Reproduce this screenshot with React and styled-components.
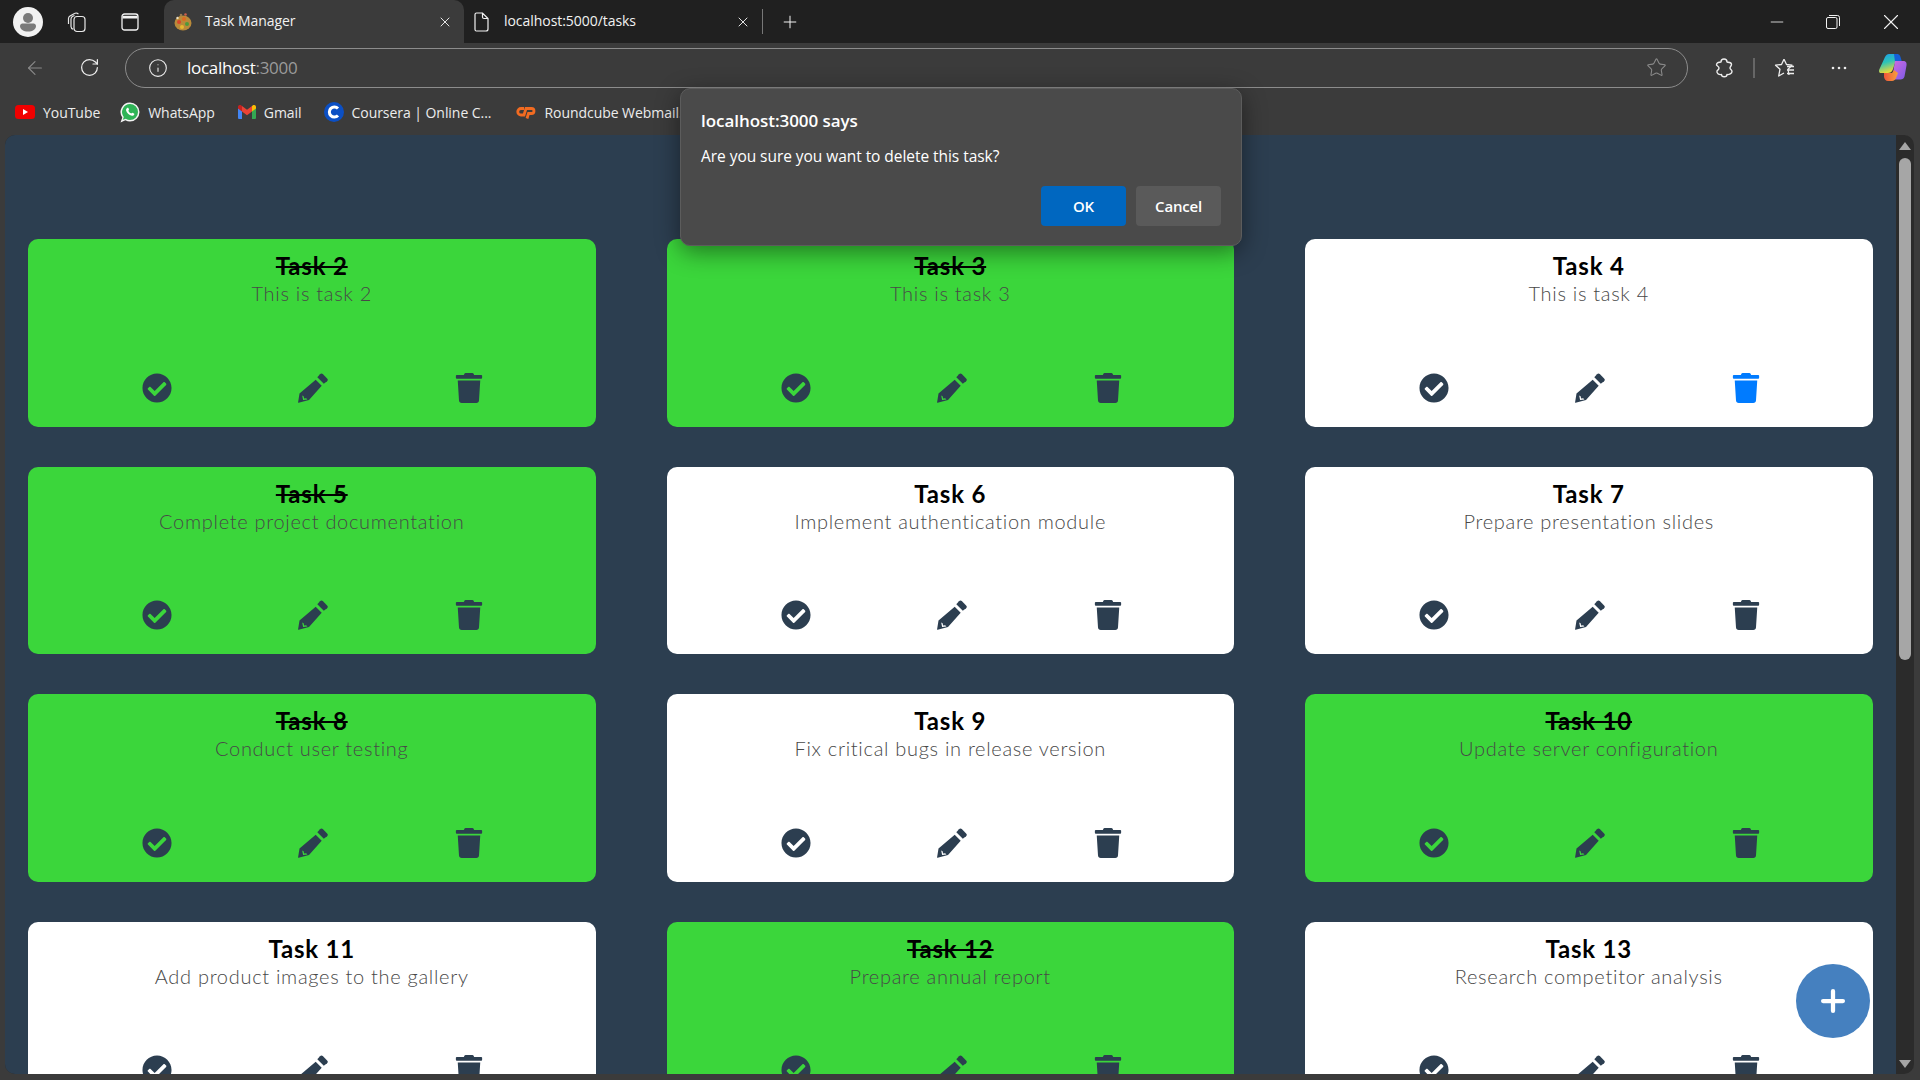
import React from "react";
import styled, { createGlobalStyle } from "styled-components";
import { FaCheckCircle, FaTrash } from "react-icons/fa";
import { ArrowLeft, RotateCw, Info, Star, Minus, X, Plus } from "lucide-react";

const uiFont = `"Open Sans", "Noto Sans", sans-serif`;

const GlobalStyle = createGlobalStyle`
    html, body {
        margin: 0;
        height: 100%;
        overflow: hidden;
        background: #1c1c1c;
    }
    * { box-sizing: border-box; }
`;

const Shell = styled.div`
    position: relative;
    width: 1920px;
    height: 1080px;
    display: flex;
    flex-direction: column;
    overflow: hidden;
    background: #3b3b3b;
    font-family: ${uiFont};
`;

/* tab strip */
const TabStrip = styled.div`
    height: 43px;
    flex: none;
    display: flex;
    align-items: center;
    background: #202020;
    color: #f2f2f2;
`;

const StripIcons = styled.div`
    width: 164px;
    flex: none;
    display: flex;
    align-items: center;
    padding-left: 13px;
`;

const StripSlot = styled.div`
    width: ${(p) => p.$w}px;
    flex: none;
    display: flex;
    justify-content: center;
    align-items: center;
`;

const Tab = styled.div`
    height: 43px;
    width: ${(p) => p.$w}px;
    flex: none;
    display: flex;
    align-items: center;
    padding: 0 11px 0 ${(p) => p.$pl}px;
    border-radius: 10px 10px 0 0;
    background: ${(p) => (p.$active ? "#3b3b3b" : "transparent")};
`;

const TabTitle = styled.span`
    flex: 1;
    margin: 0 0 2px ${(p) => p.$ml}px;
    font-size: 14px;
    letter-spacing: -0.05px;
    white-space: nowrap;
`;

const TabDivider = styled.div`
    width: 1px;
    height: 25px;
    flex: none;
    margin: 0 17px 0 0;
    background: #777;
`;

const WindowControls = styled.div`
    margin-left: auto;
    display: flex;
    align-items: center;
    padding-right: 16px;
    gap: 38.5px;
`;

/* address bar row */
const Toolbar = styled.div`
    height: 48px;
    flex: none;
    display: flex;
    align-items: center;
    padding: 1px 0 0 24px;
`;

const NavIcons = styled.div`
    width: 101px;
    flex: none;
    display: flex;
    align-items: center;
    gap: 33px;
`;

const AddressBar = styled.div`
    width: 1563px;
    height: 40px;
    flex: none;
    display: flex;
    align-items: center;
    padding: 0 20px 0 22px;
    border: 1.5px solid #8c8c8c;
    border-radius: 20px;
`;

const Url = styled.div`
    flex: 1;
    margin-left: 19px;
    font-size: 17px;
    letter-spacing: -0.3px;
    color: #fff;
    span { color: #9a9a9a; }
`;

const ToolIcons = styled.div`
    flex: 1;
    display: flex;
    align-items: center;
    padding-left: 26px;
`;

const ToolDivider = styled.div`
    width: 1.5px;
    height: 20px;
    margin: 0 19px 0 19px;
    background: #666;
`;

const DotsSlot = styled.div`
    width: 84px;
    flex: none;
    display: flex;
    justify-content: center;
    padding-left: 5px;
`;

/* bookmarks */
const Bookmarks = styled.div`
    height: 44px;
    flex: none;
    display: flex;
    align-items: center;
    padding: 0 0 2px 15px;
    color: #ececec;
    font-size: 14px;
    letter-spacing: -0.05px;
    white-space: nowrap;
`;

const Bookmark = styled.div`
    display: flex;
    align-items: center;
    gap: 8px;
    margin-right: ${(p) => p.$mr}px;
`;

/* page viewport */
const Viewport = styled.div`
    flex: 1;
    min-height: 0;
    display: flex;
    margin: 0 6px 6px 5px;
    border-radius: 10px;
    overflow: hidden;
    background: #2b2b2b;
`;

const Page = styled.div`
    flex: 1;
    min-width: 0;
    overflow: hidden;
    background: #2c3e50;
    padding: 104px 0 0 23px;
`;

const ScrollTrack = styled.div`
    width: 18px;
    flex: none;
    display: flex;
    flex-direction: column;
    align-items: center;
    padding-top: 7px;
`;

const ScrollArrow = styled.div`
    width: 0;
    height: 0;
    border-left: 6px solid transparent;
    border-right: 6px solid transparent;
    border-${(p) => (p.$down ? "top" : "bottom")}: 8px solid #a6a6a6;
    margin-top: ${(p) => (p.$down ? "auto" : "0")};
    margin-bottom: ${(p) => (p.$down ? "6px" : "8px")};
`;

const ScrollThumb = styled.div`
    width: 12px;
    height: 502px;
    border-radius: 6px;
    background: #a6a6a6;
`;

const TaskGrid = styled.div`
    display: grid;
    grid-template-columns: repeat(3, 567.5px);
    column-gap: 71px;
    grid-auto-rows: 187.5px;
    row-gap: 40px;
`;

const Card = styled.div`
    display: flex;
    flex-direction: column;
    align-items: center;
    padding: 13px 50px 24px;
    border-radius: 10px;
    background: ${(p) => (p.$done ? "#3bd63b" : "#fff")};
    color: #000;
`;

const CardTitle = styled.h3`
    margin: 0;
    font-family: Lato, sans-serif;
    font-size: 24px;
    line-height: 28px;
    font-weight: 700;
    letter-spacing: 0.8px;
    text-decoration: ${(p) => (p.$done ? "line-through" : "none")};
`;

const CardText = styled.p`
    margin: -1px 0 0;
    font-family: Lato, sans-serif;
    font-size: 20px;
    line-height: 28px;
    font-weight: 300;
    letter-spacing: 0.7px;
    color: #484848;
`;

const CardActions = styled.div`
    align-self: stretch;
    margin: auto -2px 0 1px;
    display: flex;
    justify-content: space-around;
    align-items: center;
    font-size: 30px;
    line-height: 0;
    color: #2c3e50;
`;

const TrashBtn = styled.span`
    display: inline-flex;
    color: ${(p) => (p.$hover ? "#007bff" : "#2c3e50")};
`;

const Fab = styled.button`
    position: absolute;
    left: 1796px;
    top: 964px;
    width: 74px;
    height: 74px;
    display: flex;
    align-items: center;
    justify-content: center;
    border: none;
    border-radius: 50%;
    background: #4580bf;
    color: #fff;
`;

/* the alert */
const Dialog = styled.div`
    position: absolute;
    left: 680px;
    top: 88px;
    width: 562px;
    height: 158px;
    padding: 22px 20px 0;
    border: 1px solid #5c5c5c;
    border-radius: 10px;
    background: #4a4a4a;
    color: #fff;
    box-shadow: 0 6px 24px rgba(0, 0, 0, 0.45);
`;

const DialogTitle = styled.div`
    font-size: 17px;
    line-height: 20px;
    font-weight: 600;
    letter-spacing: -0.05px;
`;

const DialogText = styled.div`
    margin-top: 15px;
    font-size: 15.5px;
    line-height: 20px;
    letter-spacing: -0.05px;
`;

const DialogButtons = styled.div`
    margin-top: 20px;
    display: flex;
    justify-content: flex-end;
    gap: 10px;
`;

const DialogButton = styled.button`
    width: 85px;
    height: 40px;
    border: none;
    border-radius: 4px;
    font-family: ${uiFont};
    font-size: 15px;
    font-weight: 600;
    letter-spacing: -0.2px;
    color: #fff;
    background: ${(p) => (p.$primary ? "#0067c0" : "#5a5a5a")};
`;

const tasks = [
    ["Task 2", "This is task 2", true],
    ["Task 3", "This is task 3", true],
    ["Task 4", "This is task 4", false],
    ["Task 5", "Complete project documentation", true],
    ["Task 6", "Implement authentication module", false],
    ["Task 7", "Prepare presentation slides", false],
    ["Task 8", "Conduct user testing", true],
    ["Task 9", "Fix critical bugs in release version", false],
    ["Task 10", "Update server configuration", true],
    ["Task 11", "Add product images to the gallery", false],
    ["Task 12", "Prepare annual report", true],
    ["Task 13", "Research competitor analysis", false],
];

const ProfileIcon = () => (
    <svg width="30" height="30" viewBox="0 0 30 30">
        <circle cx="15" cy="15" r="15" fill="#f2f2f2" />
        <circle cx="15" cy="11" r="5" fill="#7a7a7a" />
        <path d="M7 19c0-2 2-2.500 3-2.500h10c1 0 3 .5 3 2.500 0 3.500-3.500 5.500-8 5.500s-8-2-8-5.500z" fill="#7a7a7a" />
    </svg>
);

const CollectionsIcon = () => (
    <svg width="22" height="22" viewBox="0 0 22 22" fill="none" stroke="#e8e8e8" strokeWidth="1.2">
        <rect x="8" y="5.500" width="11" height="15" rx="3" />
        <path d="M8.500 4.500 6.800 5.200A3 3 0 0 0 5 8v7.500a3 3 0 0 0 2 2.700M12.500 3l-1-.6a3 3 0 0 0-3 .1L4 5a3 3 0 0 0-1.500 2.500v5.500" />
    </svg>
);

const VerticalTabsIcon = () => (
    <svg width="18" height="18" viewBox="0 0 18 18" fill="none" stroke="#f2f2f2" strokeWidth="1.3">
        <rect x="1" y="1" width="16" height="16" rx="2.500" />
        <path d="M1.500 2.800h15v2.700h-15z" fill="#f2f2f2" stroke="none" />
    </svg>
);

const PizzaIcon = () => (
    <svg width="18" height="20" viewBox="0 0 18 20">
        <ellipse cx="9" cy="11" rx="8.500" ry="7.500" fill="#b98a3a" />
        <circle cx="5" cy="10" r="2" fill="#d8452b" />
        <circle cx="10" cy="7" r="2" fill="#e06a20" />
        <circle cx="13" cy="12" r="2" fill="#4e9a3a" />
        <circle cx="8" cy="15" r="2" fill="#e8b92f" />
        <circle cx="7" cy="3" r="1.300" fill="#9a7a50" />
        <circle cx="11.500" cy="2.500" r="1.300" fill="#d0604a" />
        <circle cx="3.500" cy="6" r="1.200" fill="#e8e0c8" />
    </svg>
);

const FileIcon = () => (
    <svg width="15" height="20" viewBox="0 0 15 20" fill="none" stroke="#f2f2f2" strokeWidth="1.2">
        <path d="M2.500 1h6l5.500 5.500V17a2 2 0 0 1-2 2H2.500a1.500 1.500 0 0 1-1.500-1.500v-15A1.500 1.500 0 0 1 2.500 1zM8.500 1v4a1.500 1.500 0 0 0 1.500 1.500h4" />
    </svg>
);

const RestoreIcon = () => (
    <svg width="14" height="14" viewBox="0 0 14 14" fill="none" stroke="#f2f2f2" strokeWidth="1">
        <rect x="0.500" y="2.500" width="10.500" height="11" rx="1.500" />
        <path d="M3 .5h8.500a2 2 0 0 1 2 2V11" />
    </svg>
);

const PuzzleIcon = () => (
    <svg width="20" height="20" viewBox="0 0 20 20" fill="none" stroke="#ededed" strokeWidth="1.4" strokeLinejoin="round">
        <path d="M7 4c0-4 6-4 6 0 0 .6 4.500-.5 4.500 2.500 0 1.500-1.500 2-1.500 3.500s2 1.500 2 3.500-3 3.500-5 3c0 3-5.500 3-5.500 0-3 .5-5-1.500-4.500-3.500.3-1 2-1 2-3s-3-2-2.500-3.500C3 4.500 6 4 7 4z" />
    </svg>
);

const FavoritesIcon = () => (
    <svg width="21" height="20" viewBox="0 0 21 20" fill="none" stroke="#ededed" strokeWidth="1.3" strokeLinejoin="round">
        <path d="M10 1.200l2.500 5.300 5.500.7-4 4 1 5.800M10 1.200L7.500 6.500 1.500 7.200l4.500 4-1.300 6.800 5.300-3" />
        <path d="M13 8.500h7M13 12h7M13 15.500h7" />
    </svg>
);

const DotsIcon = () => (
    <svg width="16" height="4" viewBox="0 0 16 4" fill="#ededed">
        <circle cx="2" cy="2" r="1.300" />
        <circle cx="8" cy="2" r="1.300" />
        <circle cx="14" cy="2" r="1.300" />
    </svg>
);

const CopilotIcon = () => (
    <svg width="28" height="27" viewBox="0 0 28 27">
        <defs>
            <linearGradient id="cpA" x1="0" y1="0" x2="0.3" y2="1">
                <stop offset="0" stopColor="#1b9bf0" />
                <stop offset="0.5" stopColor="#2ec4b6" />
                <stop offset="1" stopColor="#e8d83a" />
            </linearGradient>
            <linearGradient id="cpB" x1="0" y1="0" x2="1" y2="1">
                <stop offset="0" stopColor="#d26ae0" />
                <stop offset="1" stopColor="#7c5be8" />
            </linearGradient>
            <linearGradient id="cpC" x1="0" y1="0" x2="1" y2="0">
                <stop offset="0" stopColor="#f0553a" />
                <stop offset="1" stopColor="#f7a13a" />
            </linearGradient>
        </defs>
        <path d="M10 0h9l-5 15c-1 3-3 4-5 4H2c-2 0-2.500-2-1.500-4L6 3c1-2 2.500-3 4-3z" fill="url(#cpA)" />
        <path d="M15 0h3c2 0 3 1 3.500 3L23 8h-7z" fill="#1560d8" />
        <path d="M16 7h8c3 0 4 2 3.500 4.500l-2 11c-.5 2-2 3-4 3H13z" fill="url(#cpB)" />
        <path d="M5 19h8l2-3 4 3-2 5c-.5 1.500-2 3-4 3H9c-2.500 0-3.500-2-4-4z" fill="url(#cpC)" />
    </svg>
);

const YoutubeIcon = () => (
    <svg width="20" height="14" viewBox="0 0 20 14">
        <rect width="20" height="14" rx="3.500" fill="#f00000" />
        <path d="M8 4l5 3-5 3z" fill="#fff" />
    </svg>
);

const WhatsappIcon = () => (
    <svg width="20" height="21" viewBox="0 0 20 21">
        <path d="M10 .5a9.500 9.500 0 0 1 0 19c-1.700 0-3.200-.4-4.600-1.200L.5 20.500l1.800-5A9.500 9.500 0 0 1 10 .5z" fill="#f4f4f4" />
        <path d="M10 2a8 8 0 0 1 0 16c-1.500 0-2.900-.4-4.200-1.200l-3 1 1-2.900A8 8 0 0 1 10 2z" fill="#2fb457" />
        <path d="M7.200 5.800c.5-.3 1-.2 1.200.3l.6 1.400c.1.400-.5 1-.7 1.300.5 1.200 1.500 2.200 3 2.800.4-.3.800-1 1.200-.9l1.500.8c.4.200.4.700.2 1.200-.4.800-1.300 1.200-2.300 1-3-.6-5.200-2.900-5.800-5.300-.2-1 .3-1.900 1.100-2.400z" fill="#fff" />
    </svg>
);

const GmailIcon = () => (
    <svg width="18" height="14" viewBox="0 0 18 14" fill="none">
        <path d="M0 2.500V13a1 1 0 0 0 1 1h3V6z" fill="#4285f4" />
        <path d="M18 2.500V13a1 1 0 0 1-1 1h-3V6z" fill="#34a853" />
        <path d="M14 1v5.500l4-3V2c0-1.800-2-2.500-3-1.700z" fill="#fbbc04" />
        <path d="M4 1v5.500l5 3.700 5-3.700V1L9 4.800z" fill="#ea4335" />
        <path d="M4 1v5.500l-4-3V2C0 .2 2-.5 3 .3z" fill="#c5221f" />
    </svg>
);

const CourseraIcon = () => (
    <svg width="20" height="20" viewBox="0 0 20 20" fill="none">
        <circle cx="10" cy="10" r="10" fill="#0b4fc4" />
        <path d="M14 6.600A5 5 0 1 0 14 13.400" stroke="#fff" strokeWidth="3" />
    </svg>
);

const CpanelIcon = () => (
    <svg width="20" height="14" viewBox="0 0 20 14" fill="none" stroke="#f26b21" strokeWidth="2.800">
        <path d="M8 3.500H5a3.200 3.200 0 0 0 0 6.500h3l2-6.500h5.500a2.500 2.500 0 0 1 0 5H12.500L11 13.500" />
    </svg>
);

// eraser, then the tapered body with the small notch at the tip
const PencilIcon = () => (
    <svg width="30" height="30" viewBox="0 0 30 30" fill="currentColor">
        <path d="M19.300 4.300 22 1.200a2 2 0 0 1 2.800-.1l4.300 4.300a2 2 0 0 1 0 2.800l-3.300 2.600z" />
        <path
            fillRule="evenodd"
            d="M17.700 6.700l6 6L11 27 .6 29.800a.4.400 0 0 1-.5-.5L1.500 20.500zM4.200 22.500l.9 4.400 4.300-.5-1.200-1.100-2.100.2-.5-2.200z"
        />
    </svg>
);

const TaskCard = ({ title, text, done, hoverTrash }) => (
    <Card $done={done}>
        <CardTitle $done={done}>{title}</CardTitle>
        <CardText>{text}</CardText>
        <CardActions>
            <FaCheckCircle />
            <PencilIcon />
            <TrashBtn $hover={hoverTrash}>
                <FaTrash />
            </TrashBtn>
        </CardActions>
    </Card>
);

export default function App() {
    return (
        <Shell>
            <GlobalStyle />
            <TabStrip>
                <StripIcons>
                    <ProfileIcon />
                    <StripSlot $w={68}>
                        <CollectionsIcon />
                    </StripSlot>
                    <StripSlot $w={38}>
                        <VerticalTabsIcon />
                    </StripSlot>
                </StripIcons>
                <Tab $active $w={300} $pl={10}>
                    <PizzaIcon />
                    <TabTitle $ml={13}>Task Manager</TabTitle>
                    <X size={16} strokeWidth={1.4} />
                </Tab>
                <Tab $w={298} $pl={10}>
                    <FileIcon />
                    <TabTitle $ml={15}>localhost:5000/tasks</TabTitle>
                    <X size={16} strokeWidth={1.4} />
                </Tab>
                <TabDivider />
                <Plus size={20} strokeWidth={1.2} />
                <WindowControls>
                    <Minus size={20} strokeWidth={1} />
                    <RestoreIcon />
                    <X size={26} strokeWidth={1} />
                </WindowControls>
            </TabStrip>

            <Toolbar>
                <NavIcons>
                    <ArrowLeft size={22} strokeWidth={1.2} color="#8a8a8a" />
                    <RotateCw size={21} strokeWidth={1.4} color="#eee" />
                </NavIcons>
                <AddressBar>
                    <Info size={20} strokeWidth={1.3} color="#eee" />
                    <Url>
                        localhost<span>:3000</span>
                    </Url>
                    <Star size={21} strokeWidth={1.2} color="#8a8a8a" />
                </AddressBar>
                <ToolIcons>
                    <PuzzleIcon />
                    <ToolDivider />
                    <FavoritesIcon />
                    <DotsSlot>
                        <DotsIcon />
                    </DotsSlot>
                    <CopilotIcon />
                </ToolIcons>
            </Toolbar>

            <Bookmarks>
                <Bookmark $mr={20}>
                    <YoutubeIcon />
                    YouTube
                </Bookmark>
                <Bookmark $mr={23}>
                    <WhatsappIcon />
                    WhatsApp
                </Bookmark>
                <Bookmark $mr={22}>
                    <GmailIcon />
                    Gmail
                </Bookmark>
                <Bookmark $mr={25}>
                    <CourseraIcon />
                    Coursera | Online C...
                </Bookmark>
                <Bookmark $mr={0}>
                    <CpanelIcon />
                    Roundcube Webmail...
                </Bookmark>
            </Bookmarks>

            <Viewport>
                <Page>
                    <TaskGrid>
                        {tasks.map(([title, text, done]) => (
                            <TaskCard key={title} title={title} text={text} done={done} hoverTrash={title === "Task 4"} />
                        ))}
                    </TaskGrid>
                </Page>
                <ScrollTrack>
                    <ScrollArrow />
                    <ScrollThumb />
                    <ScrollArrow $down />
                </ScrollTrack>
            </Viewport>

            <Fab>
                <Plus size={34} strokeWidth={3} />
            </Fab>

            <Dialog>
                <DialogTitle>localhost:3000 says</DialogTitle>
                <DialogText>Are you sure you want to delete this task?</DialogText>
                <DialogButtons>
                    <DialogButton $primary>OK</DialogButton>
                    <DialogButton>Cancel</DialogButton>
                </DialogButtons>
            </Dialog>
        </Shell>
    );
}
